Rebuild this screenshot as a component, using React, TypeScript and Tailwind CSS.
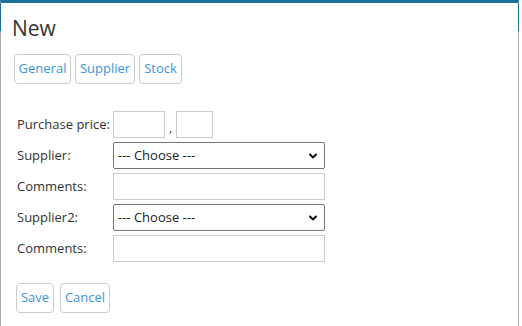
import { ChevronDown } from 'lucide-react'

const font = { fontFamily: '"Open Sans", "Noto Sans", sans-serif' }

function TabButton({ label, className }: { label: string; className?: string }) {
  return (
    <button
      className={`h-[30px] rounded-[4px] border border-[#cccccc] bg-white text-[13px] text-[#3b95dc] ${className ?? ''}`}
    >
      {label}
    </button>
  )
}

function Choose() {
  return (
    <div className="relative h-[27px] w-[212px]">
      <select className="h-full w-full appearance-none rounded-[2px] border border-[#767676] bg-white pl-[4px] text-[13px] text-[#222]">
        <option>--- Choose ---</option>
      </select>
      <ChevronDown size={12} strokeWidth={4} className="pointer-events-none absolute right-[6px] top-[8px] text-[#111]" />
    </div>
  )
}

function TextBox({ w }: { w: string }) {
  return <input className={`h-[27px] border border-[#cccccc] bg-white ${w}`} />
}

export default function App() {
  return (
    <div className="h-[326px] w-[522px] bg-white" style={font}>
      <div className="relative h-full w-[519px] border-x border-t-[3px] border-x-[#a9a9a9] border-t-[#1c6f9b] bg-white">
        <div className="absolute -left-px top-0 h-[28px] w-px bg-[#1c6f9b]" />
        <div className="absolute -right-px top-0 h-[28px] w-px bg-[#1c6f9b]" />

        <h1 className="ml-[11px] mt-[12px] text-[21px] leading-[26px] text-[#333]">New</h1>

        <div className="ml-[13px] mt-[13px] flex gap-[4px]">
          <TabButton label="General" className="w-[57px]" />
          <TabButton label="Supplier" className="w-[60px]" />
          <TabButton label="Stock" className="w-[43px]" />
        </div>

        <div className="ml-[16px] mt-[27px] grid grid-cols-[96px_auto] gap-y-[4px] text-[13px] text-[#333]">
          <span className="self-center">Purchase price:</span>
          <div className="flex items-center">
            <TextBox w="w-[52px]" />
            <span className="mx-[4px] mt-[6px] text-[#555]">,</span>
            <TextBox w="w-[37px]" />
          </div>

          <span className="self-center">Supplier:</span>
          <Choose />

          <span className="self-center">Comments:</span>
          <TextBox w="w-[212px]" />

          <span className="self-center">Supplier2:</span>
          <Choose />

          <span className="self-center">Comments:</span>
          <TextBox w="w-[212px]" />
        </div>

        <div className="ml-[15px] mt-[21px] flex gap-[6px]">
          <TabButton label="Save" className="w-[38px]" />
          <TabButton label="Cancel" className="w-[50px]" />
        </div>
      </div>
    </div>
  )
}
